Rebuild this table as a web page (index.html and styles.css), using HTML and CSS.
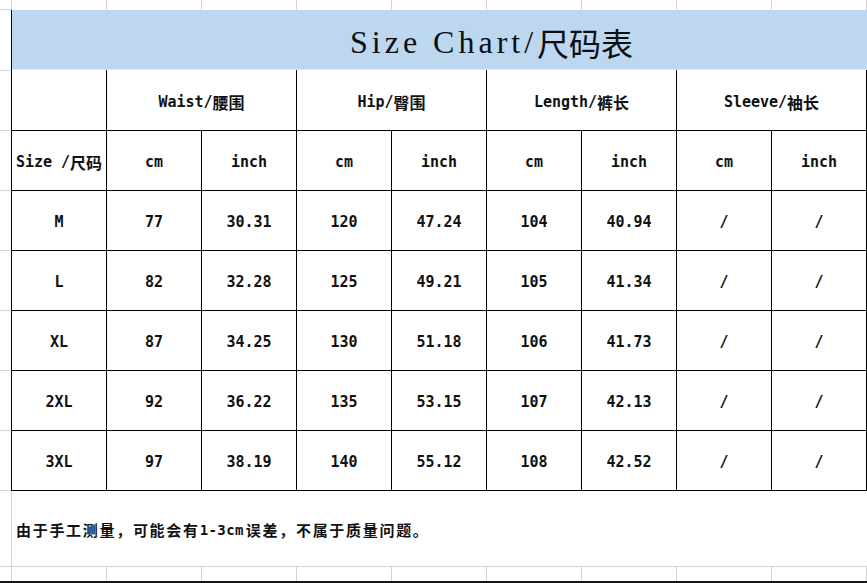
FILE: index.html
```html
<!DOCTYPE html>
<html lang="zh">
<head>
<meta charset="utf-8">
<title>Size Chart</title>
<link rel="stylesheet" href="styles.css">
</head>
<body>
<div class="sheet">
  <div class="toprow">
    <div class="corner"></div>
    <div class="col"></div><div class="col"></div><div class="col"></div>
    <div class="col"></div><div class="col"></div><div class="col"></div>
    <div class="col"></div><div class="col"></div><div class="col"></div>
  </div>
  <div class="main">
    <div class="gutter">
      <div class="g-first"></div>
      <div></div><div></div><div></div><div></div><div></div><div></div><div></div>
      <div class="g-note"></div>
      <div class="g-tail"></div>
    </div>
    <div class="content">
      <div class="chart">
        <div class="title"><span class="en">Size Chart/</span><span class="zh-title">尺码表</span></div>

        <div class="cell"></div>
        <div class="cell group">Waist/<span class="zh">腰围</span></div>
        <div class="cell group">Hip/<span class="zh">臀围</span></div>
        <div class="cell group">Length/<span class="zh">裤长</span></div>
        <div class="cell group">Sleeve/<span class="zh">袖长</span></div>

        <div class="cell">Size /<span class="zh">尺码</span></div>
        <div class="cell">cm</div><div class="cell">inch</div>
        <div class="cell">cm</div><div class="cell">inch</div>
        <div class="cell">cm</div><div class="cell">inch</div>
        <div class="cell">cm</div><div class="cell">inch</div>

        <div class="cell">M</div><div class="cell">77</div><div class="cell">30.31</div><div class="cell">120</div><div class="cell">47.24</div><div class="cell">104</div><div class="cell">40.94</div><div class="cell">/</div><div class="cell">/</div>
        <div class="cell">L</div><div class="cell">82</div><div class="cell">32.28</div><div class="cell">125</div><div class="cell">49.21</div><div class="cell">105</div><div class="cell">41.34</div><div class="cell">/</div><div class="cell">/</div>
        <div class="cell">XL</div><div class="cell">87</div><div class="cell">34.25</div><div class="cell">130</div><div class="cell">51.18</div><div class="cell">106</div><div class="cell">41.73</div><div class="cell">/</div><div class="cell">/</div>
        <div class="cell">2XL</div><div class="cell">92</div><div class="cell">36.22</div><div class="cell">135</div><div class="cell">53.15</div><div class="cell">107</div><div class="cell">42.13</div><div class="cell">/</div><div class="cell">/</div>
        <div class="cell">3XL</div><div class="cell">97</div><div class="cell">38.19</div><div class="cell">140</div><div class="cell">55.12</div><div class="cell">108</div><div class="cell">42.52</div><div class="cell">/</div><div class="cell">/</div>
      </div>
      <div class="note">由于手工测量，可能会有<span class="num">1-3cm</span>误差，不属于质量问题。</div>
      <div class="tail">
        <div></div><div></div><div></div><div></div><div></div><div></div><div></div><div></div><div></div>
      </div>
    </div>
  </div>
  <div class="bar"></div>
</div>
</body>
</html>
```

FILE: styles.css
```css
* {
  box-sizing: border-box;
}

body {
  margin: 0;
  background: #ffffff;
  color: #111111;
  font-family: "DejaVu Sans Mono", "Noto Sans CJK SC", monospace;
}

.sheet {
  width: 867px;
  height: 583px;
  overflow: hidden;
  display: flex;
  flex-direction: column;
}

/* spreadsheet strip above the chart */
.toprow {
  display: flex;
  height: 10px;
}

.toprow .corner {
  width: 12px;
  border-right: 1px solid #d2d2d2;
  border-bottom: 1px solid #d2d2d2;
}

.toprow .col {
  width: 95px;
  border-right: 1px solid #d2d2d2;
}

.main {
  display: flex;
}

/* left gutter with the spreadsheet row lines */
.gutter {
  width: 11px;
  display: flex;
  flex-direction: column;
}

.gutter div {
  height: 60px;
  border-bottom: 1px solid #d2d2d2;
}

.gutter .g-first {
  height: 61px;
}

.gutter .g-note {
  height: 76px;
}

.gutter .g-tail {
  height: 14px;
  border-bottom: none;
}

.content {
  width: 856px;
  display: flex;
  flex-direction: column;
}

/* the chart itself */
.chart {
  display: grid;
  grid-template-columns: repeat(9, 95px);
  grid-template-rows: 60px 61px repeat(6, 60px);
  border-left: 1px solid #000000;
}

.title {
  grid-column: 1 / -1;
  background: #bdd7ee;
  border-bottom: 1px solid #e4edf6;
  display: flex;
  align-items: center;
  padding-left: 338px;
  padding-top: 5px;
  color: #0c0e14;
}

.title .en {
  font-family: "Liberation Serif", serif;
  font-size: 32px;
  letter-spacing: 4px;
}

.title .zh-title {
  font-family: "Noto Sans CJK SC", sans-serif;
  font-size: 32px;
  font-weight: 400;
}

.cell {
  border-right: 1px solid #000000;
  border-bottom: 1px solid #000000;
  display: flex;
  align-items: center;
  justify-content: center;
  padding-top: 3px;
  font-size: 15px;
  font-weight: bold;
  white-space: nowrap;
}

.cell.group {
  grid-column: span 2;
}

.zh {
  font-family: "Noto Sans CJK SC", sans-serif;
  font-size: 16px;
  font-weight: 700;
}

/* merged note row */
.note {
  height: 76px;
  border-left: 1px solid #d2d2d2;
  border-bottom: 1px solid #d2d2d2;
  display: flex;
  align-items: center;
  padding-left: 4px;
  padding-top: 2px;
  font-family: "Noto Sans CJK SC", sans-serif;
  font-size: 15px;
  font-weight: 700;
  letter-spacing: 1.7px;
  white-space: nowrap;
}

.note .num {
  font-family: "DejaVu Sans Mono", monospace;
  font-size: 14px;
  font-weight: bold;
  letter-spacing: 0.4px;
  margin-right: 2px;
}

.tail {
  display: flex;
  height: 14px;
  border-left: 1px solid #d2d2d2;
}

.tail div {
  width: 95px;
  border-right: 1px solid #d2d2d2;
}

.bar {
  height: 2px;
  background: #161616;
}
```
